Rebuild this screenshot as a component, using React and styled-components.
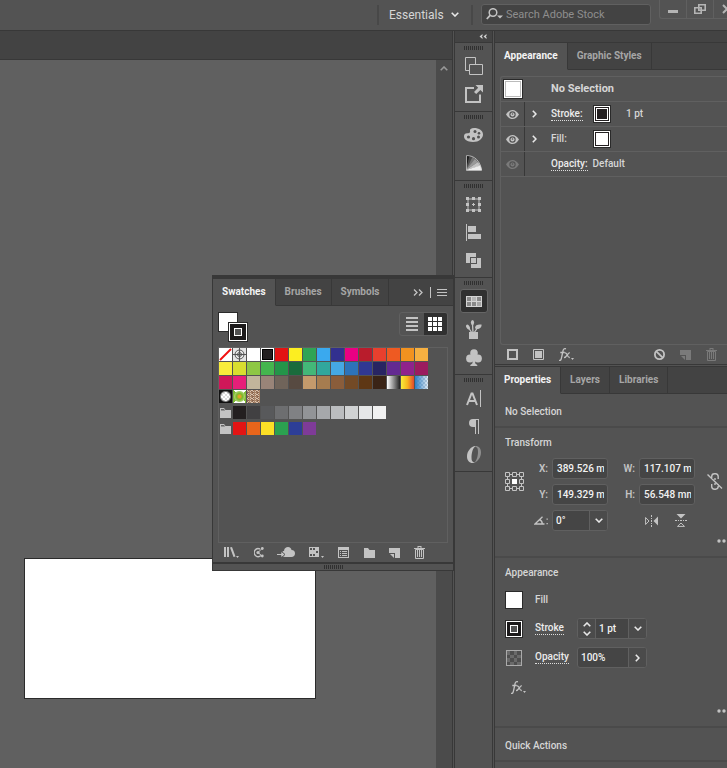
import React from "react";
import styled, { createGlobalStyle, css } from "styled-components";

const C = {
  panel: "#535353",
  strip: "#434343",
  line: "#383838",
  soft: "#606060",
  field: "#454545",
  icon: "#c3c3c3",
  text: "#d6d6d6",
  dim: "#a6a6a6",
};

const Global = createGlobalStyle`
  * { box-sizing: border-box; }
  body {
    margin: 0;
    background: ${C.panel};
    color: ${C.text};
    font: 500 10px/14px Roboto, "Noto Sans", sans-serif;
    overflow: hidden;
  }
  button, input {
    margin: 0;
    padding: 0;
    border: 0;
    border-radius: 0;
    background: none;
    color: inherit;
    font: inherit;
  }
  svg { display: block; flex: none; }
  h2 { margin: 0; font: inherit; }
`;

/* ---------- page frame ---------- */

const Page = styled.div`
  display: flex;
  flex-direction: column;
  min-height: 100vh;
`;

const TopBar = styled.header`
  display: flex;
  justify-content: flex-end;
  height: 31px;
  border-bottom: 1px solid ${C.line};
`;

const Workspace = styled.main`
  display: grid;
  grid-template-columns: minmax(0, 1fr) 43px 232px;
  flex: 1;
`;

const Divider = styled.span`
  width: 2px;
  height: 20px;
  margin-top: 5px;
  background: #484848;
`;

const WorkspaceMenu = styled.button`
  display: flex;
  align-items: center;
  justify-content: space-between;
  width: 92px;
  height: 29px;
  padding: 0 12px 0 10px;
  font-size: 12px;
  font-weight: 400;
`;

const Search = styled.label`
  display: flex;
  align-items: center;
  gap: 2px;
  width: 170px;
  height: 21px;
  margin: 4px 0 0 8px;
  padding-left: 4px;
  border: 1px solid ${C.soft};
  border-radius: 3px;
  background: ${C.strip};
`;

const SearchInput = styled.input`
  flex: 1;
  min-width: 0;
  font-size: 11px;
  font-weight: 400;
  outline: none;
  &::placeholder { color: #8e8e8e; opacity: 1; }
`;

const WindowControls = styled.div`
  display: flex;
  width: 68px;
  height: 19px;
  margin-left: 8px;
  border: 1px solid ${C.soft};
  border-width: 0 0 1px 1px;
  border-radius: 0 0 0 3px;
  overflow: hidden;
`;

const WindowButton = styled.button`
  display: flex;
  align-items: center;
  justify-content: center;
  flex: none;
  width: 27px;
  border-right: 1px solid ${C.soft};
`;

/* ---------- document ---------- */

const Document = styled.section`
  display: flex;
  flex-direction: column;
  position: relative;
`;

const DocumentTabs = styled.div`
  height: 29px;
  background: ${C.strip};
  border-bottom: 1px solid ${C.line};
`;

const DocumentView = styled.div`
  display: flex;
  flex: 1;
`;

const Canvas = styled.div`
  position: relative;
  flex: 1;
  background: ${C.soft};
`;

const Artboard = styled.div`
  position: absolute;
  left: 24px;
  top: 498px;
  width: 292px;
  height: 141px;
  background: #fff;
  border: 1px solid #2b2b2b;
`;

const ScrollTrack = styled.div`
  display: flex;
  justify-content: center;
  width: 16px;
  padding-top: 6px;
  background: #4b4b4b;
`;

/* ---------- tabs ---------- */

const TabRow = styled.div`
  display: flex;
  height: 27px;
  background: ${C.strip};
`;

const Tab = styled.button.attrs({ role: "tab" })`
  padding: 0 9px;
  border-right: 1px solid ${C.line};
  border-bottom: 1px solid ${C.line};
  color: ${C.dim};
  font-weight: 700;
  ${(p) =>
    p.$active &&
    css`
      background: ${C.panel};
      border-bottom-color: ${C.panel};
      color: #f4f4f4;
    `}
`;

const TabFill = styled.div`
  display: flex;
  align-items: center;
  justify-content: flex-end;
  gap: 7px;
  flex: 1;
  padding-right: 6px;
  border-bottom: 1px solid ${C.line};
`;

/* ---------- dock ---------- */

const Dock = styled.nav`
  display: flex;
  flex-direction: column;
  border: 3px double ${C.line};
  border-width: 0 3px;
`;

const CollapseBar = styled.div`
  display: flex;
  align-items: center;
  justify-content: flex-end;
  height: 12px;
  padding-right: 5px;
  background: ${C.strip};
  border-bottom: 1px solid ${C.line};
`;

const DockGroup = styled.div`
  display: flex;
  flex-direction: column;
  align-items: center;
  padding: 3px 0;
  border-bottom: 1px solid ${C.line};
`;

const Grip = styled.span`
  width: 19px;
  height: 4px;
  background: repeating-linear-gradient(90deg, #303030 0 1px, transparent 1px 2px);
`;

const DockList = styled.div`
  display: flex;
  flex-direction: column;
  padding-top: 2px;
`;

const DockButton = styled.button`
  display: flex;
  align-items: center;
  justify-content: center;
  width: 28px;
  height: 24px;
  margin: 2px 0;
  border-radius: 3px;
  ${(p) =>
    p.$active &&
    css`
      background: #303030;
      border: 1px solid #666;
    `}
`;

/* ---------- floating swatches panel ---------- */

const FloatingPanel = styled.section`
  position: absolute;
  z-index: 1;
  left: 212px;
  top: 244px;
  width: 242px;
  background: ${C.panel};
  border: 1px solid ${C.line};
  border-top-width: 4px;
`;

const SwatchHeader = styled.div`
  display: flex;
  justify-content: space-between;
  padding: 6px 5px 5px 5px;
`;

const FillStroke = styled.div`
  position: relative;
  width: 30px;
  height: 30px;
`;

const StrokeFront = styled.span`
  position: absolute;
  left: 10px;
  top: 10px;
`;

const ViewToggle = styled.div`
  display: flex;
  width: 49px;
  height: 24px;
  border: 1px solid ${C.soft};
  border-radius: 3px;
  overflow: hidden;
`;

const ViewButton = styled.button`
  display: flex;
  align-items: center;
  justify-content: center;
  flex: 1;
  background: ${(p) => (p.$active ? "#303030" : "transparent")};
`;

const SwatchList = styled.div`
  display: flex;
  flex-direction: column;
  gap: 1px;
  height: 196px;
  margin: 0 5px;
  border: 1px solid ${C.soft};
`;

const SwatchRow = styled.div`
  display: flex;
  align-items: center;
  gap: 1px;
  margin-top: ${(p) => (p.$group ? "2px" : "0")};
`;

const Swatch = styled.button`
  width: 13px;
  height: 13px;
  background: ${(p) => p.$fill};
  ${(p) =>
    p.$selected &&
    css`
      border: 1px solid #fff;
      box-shadow: inset 0 0 0 1px #000;
    `}
`;

const PanelFooter = styled.div`
  display: flex;
  align-items: center;
  justify-content: space-between;
  height: 19px;
  padding: 0 28px 0 11px;
`;

const ResizeBar = styled.div`
  display: flex;
  align-items: center;
  justify-content: center;
  height: 8px;
  border-top: 2px solid ${C.line};
`;

const IconButton = styled.button`
  display: flex;
  opacity: ${(p) => (p.$faded ? 0.35 : 1)};
`;

/* ---------- right column ---------- */

const Side = styled.aside`
  min-width: 0;
`;

const AppearanceList = styled.div`
  height: 269px;
  margin: 6px 0 0 5px;
  border: 1px solid ${C.soft};
  border-right: 0;
  border-radius: 3px 0 0 3px;
`;

const AppearanceRow = styled.div`
  display: flex;
  align-items: stretch;
  height: 25px;
  border-bottom: 1px solid ${C.soft};
`;

const EyeCell = styled.button`
  display: flex;
  align-items: center;
  justify-content: center;
  width: 24px;
  border-right: 1px solid ${(p) => (p.$plain ? "transparent" : C.line)};
`;

const RowBody = styled.div`
  display: flex;
  align-items: center;
  flex: 1;
`;

const Expander = styled.button`
  width: 26px;
  padding-left: 7px;
`;

const RowLabel = styled.span`
  width: ${(p) => (p.$auto ? "auto" : "42px")};
  margin-right: ${(p) => (p.$auto ? "5px" : "0")};
  font-weight: ${(p) => (p.$bold ? 700 : 500)};
  font-size: ${(p) => (p.$bold ? "11px" : "10px")};
`;

const Dotted = styled.button`
  height: 13px;
  border-bottom: 1px dotted #ddd;
  color: #ececec;
  line-height: 12px;
  font-weight: 500;
`;

const RowValue = styled.span`
  margin-left: 15px;
`;

const AppearanceFooter = styled.div`
  display: flex;
  align-items: center;
  gap: 15px;
  height: 19px;
  padding: 0 10px 0 12px;
`;

const Spring = styled.span`
  flex: 1;
`;

const Seam = styled.div`
  height: 3px;
  border-top: 1px solid ${C.line};
  border-bottom: 1px solid ${C.line};
`;

const Section = styled.section`
  padding: ${(p) => (p.$short ? "11px 0 7px 10px" : "8px 0 11px 10px")};
  border-bottom: 2px solid #4a4a4a;
`;

const TransformGrid = styled.div`
  display: grid;
  grid-template-columns: 20px 27px 56px 31px 56px 1fr;
  grid-auto-rows: 21px;
  row-gap: 5px;
  align-items: center;
  margin: 8px 0;
`;

const Spanning = styled.button`
  grid-row: 1 / 3;
  padding-left: ${(p) => (p.$right ? "12px" : "0")};
  grid-column: ${(p) => (p.$right ? 6 : 1)};
`;

const FieldLabel = styled.label`
  display: flex;
  justify-content: flex-end;
  padding-right: 4px;
  color: #c4c4c4;
  font-weight: 600;
  grid-column: ${(p) => p.$col};
`;

const Box = styled.div`
  display: flex;
  height: 21px;
  width: ${(p) => (p.$wide ? "70px" : "auto")};
  border: 1px solid ${C.soft};
  border-radius: 3px;
  background: ${C.field};
  overflow: hidden;
`;

const Value = styled.input`
  flex: 1;
  width: 0;
  min-width: 0;
  margin: 0 ${(p) => (p.$clip ? "3px" : "0")} 0 ${(p) => (p.$clip ? "4px" : "3px")};
  color: #f2f2f2;
  outline: none;
`;

const BoxButton = styled.button`
  display: flex;
  flex-direction: column;
  align-items: center;
  justify-content: center;
  gap: 4px;
  width: 18px;
  background: #4b4b4b;
  border: 0 solid ${C.soft};
  border-width: ${(p) => (p.$lead ? "0 1px 0 0" : "0 0 0 1px")};
`;

const FlipPair = styled.div`
  display: flex;
  align-items: center;
  gap: 17px;
  grid-column: 5 / 7;
  padding-left: 6px;
`;

const MoreRow = styled.div`
  display: flex;
  justify-content: flex-end;
  height: 6px;
`;

const PropRow = styled.div`
  display: grid;
  grid-template-columns: 30px 42px 1fr;
  align-items: center;
  height: 29px;
`;

const PropList = styled.div`
  padding: 5px 0 15px;
`;

const Start = styled.span`
  display: flex;
`;

const FxSlot = styled.div`
  padding: 9px 0 0 6px;
`;

/* ---------- icons ---------- */

const Svg = ({ w, h, children, color = C.icon }) => (
  <svg width={w} height={h} viewBox={`0 0 ${w} ${h}`} fill={color} aria-hidden="true">
    {children}
  </svg>
);

const Chevron = ({ dir = "down", color = "#e8e8e8", w = 8, h = 5 }) => {
  const d = {
    down: "M.7.8 4 4 7.3.8",
    up: "M.7 4.2 4 1 7.3 4.2",
    right: "M.8.7 4 4 .8 7.3",
  }[dir];
  const side = dir === "right";
  return (
    <svg width={side ? h : w} height={side ? w : h} viewBox={side ? "0 0 5 8" : "0 0 8 5"} aria-hidden="true">
      <path d={d} fill="none" stroke={color} strokeWidth="1.6" />
    </svg>
  );
};

const SearchIcon = () => (
  <Svg w={18} h={13}>
    <circle cx="7" cy="4.5" r="3.8" fill="none" stroke={C.icon} strokeWidth="1.5" />
    <path d="M4.3 7.2 0.8 11" stroke={C.icon} strokeWidth="1.8" />
    <path d="M11 7.5h6l-3 3z" />
  </Svg>
);

const Minimize = () => (
  <Svg w={10} h={12}><rect y="7" width="10" height="3" fill="#b4b4b4" /></Svg>
);
const Restore = () => (
  <Svg w={12} h={10}>
    <path d="M4.8.8h6.4v5.4H4.8z M.8 3.8h6.4v5.4H.8z" fill={C.panel} stroke="#b4b4b4" strokeWidth="1.6" />
  </Svg>
);
const CloseIcon = () => (
  <Svg w={10} h={10}><path d="M1 1l8 8M9 1 1 9" stroke="#b4b4b4" strokeWidth="2" /></Svg>
);

const DoubleLeft = () => (
  <Svg w={8} h={5} color="#d0d0d0"><path d="M3.5 0 .5 2.5l3 2.5V3.2L2.7 2.5l.8-.7zM7.5 0l-3 2.5 3 2.5V3.2l-.8-.7.8-.7z" /></Svg>
);

const ArtboardsIcon = () => (
  <Svg w={18} h={18}>
    <path d="M.5.5h10v13H.5z" fill="none" stroke={C.icon} />
    <path d="M4.5 7.5h13v10h-13z" fill={C.panel} stroke={C.icon} />
  </Svg>
);
const ExportIcon = () => (
  <Svg w={18} h={18}>
    <path d="M9 3H1v14h14V9.500" fill="none" stroke={C.icon} strokeWidth="2" />
    <path d="M10.500 0H18v7.500l-2.600-2.600-4.200 4.200-2.200-2.200 4.200-4.200z" />
  </Svg>
);
const PaletteIcon = () => (
  <Svg w={19} h={14}>
    <path d="M10 0c5 0 9 2.600 9 6.500S15 14 9 14 0 11.500 0 8.300C0 6 1.500 5 3.500 5.200 5.500 5.400 6.500 4.500 6 3 5.600 1.400 7 0 10 0z" />
    <g fill={C.panel}>
      <circle cx="11" cy="3.500" r="1.500" /><circle cx="15" cy="5.300" r="1.300" />
      <circle cx="4.500" cy="9" r="1.600" /><circle cx="9.500" cy="10.700" r="1.600" /><circle cx="14.500" cy="9" r="1.500" />
    </g>
  </Svg>
);
const GradientIcon = () => (
  <Svg w={16} h={16}>
    <path d="M0 15V0l4 .8z" fill="#1e1e1e" /><path d="M0 15 3.500.6 7 2.300z" fill="#4b4b4b" />
    <path d="M0 15 6.500 2l3 2.400z" fill="#747474" /><path d="M0 15 9 4l3 3z" fill="#999" />
    <path d="M0 15 12 7l2.500 4z" fill="#c2c2c2" /><path d="M0 15l14.500-4.500L16 15z" fill="#eee" />
    <path d="M.5 15.500V.5c8 0 14 5.500 15 15z" fill="none" stroke="#ccc" strokeWidth=".8" />
  </Svg>
);
const TransformIcon = () => (
  <Svg w={15} h={15}>
    <path d="M2 2h11v11H2z" fill="none" stroke={C.icon} />
    <path d="M0 0h3v3H0zM6 0h3v3H6zM12 0h3v3h-3zM0 6h3v3H0zM12 6h3v3h-3zM0 12h3v3H0zM6 12h3v3H6zM12 12h3v3h-3zM7 6h1v3H7zM6 7h3v1H6z" />
  </Svg>
);
const AlignIcon = () => (
  <Svg w={15} h={17}><path d="M0 0h1v17H0zM2 2h8v6H2zM2 10h13v5H2z" /></Svg>
);
const PathfinderIcon = () => (
  <Svg w={15} h={15}>
    <path d="M0 0h10v4H4v6H0zM11 5h4v10H5v-4h6z" /><path d="M5 5h5v5H5z" />
  </Svg>
);
const SwatchesIcon = () => (
  <Svg w={16} h={11}>
    <path d="M0 0h16v11H0z" fill="#d4d4d4" />
    <path d="M1 1h4v4H1zM11 1h4v4h-4zM1 6h4v4H1zM6 6h4v4H6z" fill="#888" />
    <path d="M6 1h4v4H6z" fill="#b5b5b5" /><path d="M11 6h4v4h-4z" fill="#a4a4a4" />
  </Svg>
);
const BrushesIcon = () => (
  <Svg w={16} h={19}>
    <path d="M3 12h9v7H3z" />
    <path d="M2 7l4 6M6.500 4l.5 9M12 7l-4 6" stroke={C.icon} strokeWidth="1.300" />
    <ellipse cx="6.500" cy="2.500" rx="1.600" ry="2.500" /><ellipse cx="2" cy="7" rx="1.600" ry="2.600" transform="rotate(-30 2 7)" />
    <path d="M9 8c0-3 3-4 6.500-3.500C16 7 13.500 9.500 10 9z" />
  </Svg>
);
const ClubIcon = () => (
  <Svg w={16} h={17}>
    <circle cx="8" cy="4" r="3.800" /><circle cx="4" cy="9.500" r="3.900" /><circle cx="12" cy="9.500" r="3.900" />
    <path d="M7 7h2l1 4-1 0 .3 3.500 2 1.500v1h-7v-1l2-1.500L7 11z" />
  </Svg>
);
const CharacterIcon = () => (
  <Svg w={15} h={17}>
    <path d="M1 15 5.500 3.500h1L11 15M3 11h6" fill="none" stroke={C.icon} strokeWidth="2" /><path d="M14 0h1v17h-1z" />
  </Svg>
);
const ParagraphIcon = () => (
  <Svg w={12} h={15}><path d="M5 0h6v15h-1V1H8v14H7V8H5a4 4 0 0 1 0-8z" /></Svg>
);
const OpenTypeIcon = () => (
  <Svg w={14} h={17}>
    <path fillRule="evenodd" d="M8.500 0C4 .5 0 5 0 10.500 0 14.500 2.500 17 5.500 17c1 0 2-.3 3-.9-2.500.4-4-.6-4-4.100C4.500 7 6 1 8.500.8z" />
    <path fill="#8f8f8f" d="M8.500 0C12 0 14 2.500 14 6.500 14 11 11 15.500 7.500 16.600 9.500 15 11 10 11 6c0-3-.5-4.600-2.500-5.200z" />
  </Svg>
);

const EyeIcon = () => (
  <Svg w={13} h={9}>
    <path fillRule="evenodd" d="M0 4.500C2 1.500 4 0 6.500 0S11 1.500 13 4.500C11 7.500 9 9 6.500 9S2 7.500 0 4.500zM6.500 1.300a3.200 3.200 0 1 0 0 6.400 3.200 3.200 0 0 0 0-6.400z" />
    <circle cx="6.500" cy="4.500" r="2" /><circle cx="6.500" cy="4" r=".8" fill={C.panel} />
  </Svg>
);

const SolidSwatch = ({ fill = "#fff", size = 18, ring = "#231f20" }) => (
  <Svg w={size} h={size}>
    <rect width={size} height={size} fill="#2a2a2a" />
    <rect x="1" y="1" width={size - 2} height={size - 2} fill="#fff" />
    {ring && <rect x="2.500" y="2.500" width={size - 5} height={size - 5} fill="#fff" stroke={ring} />}
    {ring && <rect x="4" y="4" width={size - 8} height={size - 8} fill={fill} />}
  </Svg>
);
const StrokeSwatch = ({ size = 18 }) => {
  const m = size / 2;
  return (
    <Svg w={size} h={size}>
      <rect width={size} height={size} fill="#2a2a2a" />
      <rect x="1.500" y="1.500" width={size - 3} height={size - 3} fill="#1c1a1b" stroke="#fff" />
      <rect x={m - 3.5} y={m - 3.5} width="7" height="7" fill="#535353" stroke="#fff" />
    </Svg>
  );
};
const Checker = () => (
  <Svg w={18} h={18}>
    <rect x="1.500" y="1.500" width="15" height="15" fill="#6a6a6a" stroke="#aaa" />
    <path fill="#4e4e4e" d="M5 2h4v4H5zM12 2h4v4h-4zM2 6h3v3H2zM9 6h3v3H9zM5 9h4v4H5zM12 9h4v4h-4zM2 13h3v3H2zM9 13h3v3H9z" />
  </Svg>
);

const AddStrokeIcon = () => <Svg w={11} h={11}><path fillRule="evenodd" d="M0 0h11v11H0zM2 2v7h7V2z" /></Svg>;
const AddFillIcon = () => (
  <Svg w={11} h={11}><path d="M.5.5h10v10H.5z" fill="none" stroke={C.icon} /><path d="M2 2h7v7H2z" /></Svg>
);
const Fx = () => (
  <Svg w={15} h={13}>
    <g fill="none" stroke={C.icon} strokeWidth="1.300">
      <path d="M0 12.400C2 12.800 2.300 11 2.800 8.500L4 3C4.300 1 5.200.3 7 .8M1.300 4.500h4.500" />
      <path d="M5.800 5c3-1 2 5 5 4.500M10.800 4.600C8.500 4.600 8 9.600 5 9.600" />
    </g>
    <path d="M12 10h3l-1.500 2z" />
  </Svg>
);
const ClearIcon = () => (
  <Svg w={11} h={11}><circle cx="5.500" cy="5.500" r="4.600" fill="none" stroke={C.icon} strokeWidth="1.800" /><path d="M2.300 2.300l6.400 6.400" stroke={C.icon} strokeWidth="1.800" /></Svg>
);
const NewIcon = () => <Svg w={11} h={10}><path d="M0 0h11v10H6V5H0z" /><path d="M1 6h4v4z" /></Svg>;
const TrashIcon = () => (
  <Svg w={11} h={13}>
    <path d="M0 2h11v1H0zM3.500 0h4v2h-1V1h-2v1h-1z" />
    <path d="M1.500 3.500h8v9h-8z" fill="none" stroke={C.icon} /><path d="M3 4h1v7H3zM5 4h1v7H5zM7 4h1v7H7z" />
  </Svg>
);
const LibraryIcon = () => (
  <Svg w={16} h={11}>
    <path d="M0 0h2v10H0zM3 0h2v10H3zM6 .5l2-.5 3.500 9.500-2 .5zM12 9h3l-1.500 2z" />
  </Svg>
);
const ThemeIcon = () => (
  <Svg w={10} h={11}>
    <path d="M6 2a4 4 0 1 0 1 6.500" fill="none" stroke={C.icon} strokeWidth="1.400" />
    <circle cx="4" cy="5.500" r="1.600" /><circle cx="8.300" cy="1.500" r="1.400" /><circle cx="8.300" cy="9" r="1.400" />
    <path d="M4 5.500l4-4M4 5.500l4 3.500" stroke={C.icon} />
  </Svg>
);
const CloudIcon = () => (
  <Svg w={18} h={11}>
    <path d="M8 10c-2.500 0-3-2-3-3.500C5 4.500 6 4 7 4c.3-3 2-4 4-4s3.500 1.500 3.500 3C17 3 18 4.500 18 6.500S16.500 10 14.500 10z" />
    <path d="M0 6.500h4V4l4 3.500L4 11V8.500H0z" stroke={C.panel} strokeWidth="1" />
    <path d="M0 7h4.500v1H0z" />
  </Svg>
);
const KindsIcon = () => (
  <Svg w={15} h={11}>
    <path fillRule="evenodd" d="M0 0h10v10H0zM1 1v2h2V1zM7 4v2h2V4zM4 7v2h2V7zM4 1v2h2V1zM1 7v2h2V7z" />
    <path d="M12 9h3l-1.500 2z" />
  </Svg>
);
const OptionsIcon = () => (
  <Svg w={11} h={11}>
    <path fillRule="evenodd" d="M0 0h11v11H0zM1 3v7h9V3z" /><path d="M2 4h1v1H2zM4 4h5v1H4zM2 6h1v1H2zM4 6h5v1H4zM2 8h1v1H2zM4 8h5v1H4z" />
  </Svg>
);
const FolderIcon = ({ open }) => (
  <Svg w={13} h={10}>
    <path d="M1 0h4l1.500 2H12v8H1z" />{open && <path d="M2 1h3l1 1.500H2z" fill="#666" />}
  </Svg>
);

const ListIcon = () => <Svg w={12} h={14}><path d="M0 0h12v2H0zM0 4h12v2H0zM0 8h12v2H0zM0 12h12v2H0z" /></Svg>;
const GridIcon = () => (
  <Svg w={14} h={14} color="#fff"><path d="M0 0h4v4H0zM5 0h4v4H5zM10 0h4v4h-4zM0 5h4v4H0zM5 5h4v4H5zM10 5h4v4h-4zM0 10h4v4H0zM5 10h4v4H5zM10 10h4v4h-4z" /></Svg>
);
const MoreTabs = () => <Svg w={10} h={7}><path d="M1 .5l3 3-3 3M6 .5l3 3-3 3" fill="none" stroke={C.icon} strokeWidth="1.300" /></Svg>;
const MenuIcon = () => <Svg w={17} h={11}><path d="M0 0h1v11H0zM7 2h10v1H7zM7 5h10v1H7zM7 8h10v1H7z" /></Svg>;

const RefPointIcon = () => (
  <Svg w={19} h={19}>
    <path d="M2.500 2.500h14v14h-14z" fill="none" stroke={C.icon} />
    <g fill={C.panel} stroke={C.icon}>
      <path d="M.5.5h4v4h-4zM7.500.5h4v4h-4zM14.500.5h4v4h-4zM.5 7.500h4v4h-4zM14.500 7.500h4v4h-4zM.5 14.500h4v4h-4zM7.500 14.500h4v4h-4zM14.500 14.500h4v4h-4z" />
    </g>
    <path d="M7 7h5v5H7z" fill="#fff" />
  </Svg>
);
const UnlinkIcon = () => (
  <Svg w={16} h={17}>
    <g fill="none" stroke={C.icon} strokeWidth="1.400">
      <path d="M4.700 6V3.500A2.800 2.800 0 0 1 7.500.8h1a2.800 2.800 0 0 1 2.700 2.700V6M4.700 11v2.500a2.800 2.800 0 0 0 2.800 2.700h1a2.800 2.800 0 0 0 2.700-2.700V11M8 5v2M8 10v2M.5 1.500l14.500 14" />
    </g>
  </Svg>
);
const AngleIcon = () => (
  <Svg w={14} h={9}>
    <path d="M8.500.7 1 8h9.500M5.500 3.700C7.500 4.500 8.300 6 8.300 8" fill="none" stroke={C.icon} strokeWidth="1.300" />
    <path d="M12.500 2.500h1.300v1.300h-1.300zM12.500 7h1.300v1.300h-1.300z" />
  </Svg>
);
const FlipH = () => (
  <Svg w={13} h={12}>
    <path d="M.6 2.500 4 6 .6 9.500z" fill="none" stroke={C.icon} /><path d="M13 1.500v9L8.500 6z" />
    <path d="M6 0h1v2H6zM6 3h1v1H6zM6 5h1v2H6zM6 8h1v1H6zM6 10h1v2H6z" />
  </Svg>
);
const FlipV = () => (
  <Svg w={12} h={13}>
    <path d="M1.500 0h9L6 4.500z" /><path d="M2.500 12.400 6 9l3.500 3.400z" fill="none" stroke={C.icon} />
    <path d="M0 6h2v1H0zM3 6h1v1H3zM5 6h2v1H5zM8 6h1v1H8zM10 6h2v1h-2z" />
  </Svg>
);
const Dots = () => (
  <Svg w={10} h={4}><circle cx="2" cy="2" r="1.700" /><circle cx="7" cy="2" r="1.700" /></Svg>
);

const NoneSwatch = () => (
  <Svg w={13} h={13}><path d="M0 0h13v13H0z" fill="#fff" /><path d="M1 12 12 1" stroke="#f01010" strokeWidth="2" /></Svg>
);
const RegistrationSwatch = () => (
  <Svg w={13} h={13}>
    <path d="M0 0h13v13H0z" fill="#e4e4e4" />
    <g fill="none" stroke="#555"><circle cx="6.500" cy="6.500" r="4.500" /><circle cx="6.500" cy="6.500" r="2" /><path d="M6.500 0v13M0 6.500h13" /></g>
  </Svg>
);

/* ---------- data ---------- */

const transparentBlue =
  "linear-gradient(90deg, #2d7fc4, transparent), repeating-conic-gradient(#b9cbdc 0 25%, #e6eef5 0 50%) 0 0 / 4px 4px";

const swatchRows = [
  ["none", "registration", "#fff", "#231f20", "#e31313", "#fcee21", "#2fa455", "#3aa9ee", "#32308f", "#ea0083", "#b91c2c", "#e8402e", "#ee5a22", "#f2921f", "#f6b041"],
  ["#f8ec3b", "#d8de2f", "#8ec744", "#44b54e", "#249549", "#1a6b3c", "#43b778", "#31a79d", "#45a8e4", "#2d73b9", "#303892", "#282562", "#632a91", "#8f238c", "#9b1c5f"],
  ["#cf1759", "#e61f79", "#c2b59b", "#998478", "#70645a", "#574a41", "#c49a6c", "#a67c4f", "#8a5d3b", "#734a26", "#5e3714", "#3a2416",
    "linear-gradient(90deg, #fff, #222)", "linear-gradient(90deg, #f8ed3a, #f8b51e 50%, #e04a2c)", transparentBlue],
  [
    "radial-gradient(circle, transparent 4px, #111 6px), repeating-conic-gradient(#ddd 0 25%, #fff 0 50%) 0 0 / 4px 4px",
    "radial-gradient(circle, #e8a02a 1px, #7cb928 3px, #a5cf6a 5px, transparent 6px), repeating-conic-gradient(from 45deg at 50% 50%, #7fbb35 0 25%, #fff 0 50%)",
    "repeating-conic-gradient(from 20deg, #a98468 0 9%, #d8c3b0 0 14%, #8a6650 0 22%) 0 0 / 5px 4px",
  ],
];

const swatchGroups = [
  ["#231f20", "#414042", "#58595b", "#6d6e70", "#808184", "#929497", "#a6a8ab", "#bbbdbf", "#d0d2d3", "#e6e7e8", "#f1f1f1"],
  ["#e31414", "#e8651b", "#fcdf26", "#2ba150", "#2d3e97", "#7f3b98"],
];

const drawnSwatches = { none: NoneSwatch, registration: RegistrationSwatch };

const dockGroups = [
  [["Artboards", ArtboardsIcon], ["Asset Export", ExportIcon]],
  [["Color", PaletteIcon], ["Gradient", GradientIcon]],
  [["Transform", TransformIcon], ["Align", AlignIcon], ["Pathfinder", PathfinderIcon]],
  [["Swatches", SwatchesIcon], ["Brushes", BrushesIcon], ["Symbols", ClubIcon]],
  [["Character", CharacterIcon], ["Paragraph", ParagraphIcon], ["OpenType", OpenTypeIcon]],
];

const swatchTools = [
  ["Swatch libraries", LibraryIcon], ["Color themes", ThemeIcon], ["Add to library", CloudIcon], ["Show kinds", KindsIcon],
  ["Swatch options", OptionsIcon], ["New group", FolderIcon], ["New swatch", NewIcon], ["Delete swatch", TrashIcon],
];

/* ---------- parts ---------- */

const Tabs = ({ names, children }) => (
  <TabRow role="tablist">
    {names.map((n, i) => (
      <Tab key={n} $active={i === 0} aria-selected={i === 0}>{n}</Tab>
    ))}
    <TabFill>{children}</TabFill>
  </TabRow>
);

const SwatchCell = ({ fill, label }) => {
  const Drawing = drawnSwatches[fill];
  return (
    <Swatch $fill={Drawing ? "none" : fill} aria-label={label}>
      {Drawing && <Drawing />}
    </Swatch>
  );
};

const SwatchesPanel = () => (
  <FloatingPanel>
    <Tabs names={["Swatches", "Brushes", "Symbols"]}>
      <IconButton aria-label="More tabs"><MoreTabs /></IconButton>
      <IconButton aria-label="Panel menu"><MenuIcon /></IconButton>
    </Tabs>
    <SwatchHeader>
      <FillStroke>
        <SolidSwatch size={20} ring={null} />
        <StrokeFront><StrokeSwatch size={20} /></StrokeFront>
      </FillStroke>
      <ViewToggle>
        <ViewButton aria-label="List view"><ListIcon /></ViewButton>
        <ViewButton $active aria-label="Thumbnail view"><GridIcon /></ViewButton>
      </ViewToggle>
    </SwatchHeader>
    <SwatchList>
      {swatchRows.map((row, r) => (
        <SwatchRow key={r}>
          {row.map((fill, i) =>
            fill === "#231f20" ? (
              <Swatch key={i} $fill={fill} $selected aria-label="Black, selected" />
            ) : (
              <SwatchCell key={i} fill={fill} label={`Swatch ${r * 15 + i + 1}`} />
            )
          )}
        </SwatchRow>
      ))}
      {swatchGroups.map((row, r) => (
        <SwatchRow key={r} $group>
          <FolderIcon open />
          {row.map((fill) => <SwatchCell key={fill} fill={fill} label={fill} />)}
        </SwatchRow>
      ))}
    </SwatchList>
    <PanelFooter>
      {swatchTools.map(([name, Icon]) => (
        <IconButton key={name} aria-label={name}><Icon /></IconButton>
      ))}
    </PanelFooter>
    <ResizeBar><Grip /></ResizeBar>
  </FloatingPanel>
);

const NumberField = ({ id, label, value, col }) => (
  <>
    <FieldLabel htmlFor={id} $col={col}>{label}</FieldLabel>
    <Box><Value id={id} $clip defaultValue={value} /></Box>
  </>
);

const AppearancePanel = () => (
  <>
    <Tabs names={["Appearance", "Graphic Styles"]} />
    <AppearanceList>
      <AppearanceRow>
        <EyeCell as="span" $plain><SolidSwatch size={20} ring="#bbb" /></EyeCell>
        <RowBody><Expander as="span" /><RowLabel $bold $auto>No Selection</RowLabel></RowBody>
      </AppearanceRow>
      <AppearanceRow>
        <EyeCell aria-label="Toggle stroke"><EyeIcon /></EyeCell>
        <RowBody>
          <Expander aria-label="Expand stroke"><Chevron dir="right" /></Expander>
          <RowLabel><Dotted>Stroke:</Dotted></RowLabel>
          <SolidSwatch fill="#231f20" />
          <RowValue>1 pt</RowValue>
        </RowBody>
      </AppearanceRow>
      <AppearanceRow>
        <EyeCell aria-label="Toggle fill"><EyeIcon /></EyeCell>
        <RowBody>
          <Expander aria-label="Expand fill"><Chevron dir="right" /></Expander>
          <RowLabel>Fill:</RowLabel>
          <SolidSwatch />
        </RowBody>
      </AppearanceRow>
      <AppearanceRow>
        <EyeCell aria-label="Toggle opacity"><IconButton as="span" $faded><EyeIcon /></IconButton></EyeCell>
        <RowBody>
          <Expander as="span" />
          <RowLabel $auto><Dotted>Opacity:</Dotted></RowLabel>
          <span>Default</span>
        </RowBody>
      </AppearanceRow>
    </AppearanceList>
    <AppearanceFooter>
      <IconButton aria-label="Add stroke"><AddStrokeIcon /></IconButton>
      <IconButton aria-label="Add fill"><AddFillIcon /></IconButton>
      <IconButton aria-label="Add effect"><Fx /></IconButton>
      <Spring />
      <IconButton aria-label="Clear appearance"><ClearIcon /></IconButton>
      <IconButton $faded aria-label="Duplicate item"><NewIcon /></IconButton>
      <IconButton $faded aria-label="Delete item"><TrashIcon /></IconButton>
    </AppearanceFooter>
  </>
);

const PropertiesPanel = () => (
  <>
    <Tabs names={["Properties", "Layers", "Libraries"]} />
    <Section $short><h2>No Selection</h2></Section>
    <Section>
      <h2>Transform</h2>
      <TransformGrid>
        <Spanning aria-label="Reference point"><RefPointIcon /></Spanning>
        <NumberField id="x" label="X:" value="389.526 mm" col={2} />
        <NumberField id="w" label="W:" value="117.107 mm" col={4} />
        <Spanning $right aria-label="Constrain proportions"><UnlinkIcon /></Spanning>
        <NumberField id="y" label="Y:" value="149.329 mm" col={2} />
        <NumberField id="h" label="H:" value="56.548 mm" col={4} />
        <FieldLabel htmlFor="angle" $col={2} aria-label="Rotate"><AngleIcon /></FieldLabel>
        <Box>
          <Value id="angle" defaultValue="0°" />
          <BoxButton aria-label="Rotate presets"><Chevron /></BoxButton>
        </Box>
        <FlipPair>
          <IconButton aria-label="Flip horizontally"><FlipH /></IconButton>
          <IconButton aria-label="Flip vertically"><FlipV /></IconButton>
        </FlipPair>
      </TransformGrid>
      <MoreRow><IconButton aria-label="More transform options"><Dots /></IconButton></MoreRow>
    </Section>
    <Section>
      <h2>Appearance</h2>
      <PropList>
        <PropRow>
          <Start><SolidSwatch ring={null} /></Start>
          <span>Fill</span>
        </PropRow>
        <PropRow>
          <Start><StrokeSwatch /></Start>
          <Start><Dotted>Stroke</Dotted></Start>
          <Box $wide>
            <BoxButton $lead aria-label="Step stroke weight"><Chevron dir="up" /><Chevron /></BoxButton>
            <Value defaultValue="1 pt" aria-label="Stroke weight" />
            <BoxButton aria-label="Stroke presets"><Chevron /></BoxButton>
          </Box>
        </PropRow>
        <PropRow>
          <Start><Checker /></Start>
          <Start><Dotted>Opacity</Dotted></Start>
          <Box $wide>
            <Value defaultValue="100%" aria-label="Opacity" />
            <BoxButton aria-label="Opacity slider"><Chevron dir="right" /></BoxButton>
          </Box>
        </PropRow>
        <FxSlot><IconButton aria-label="Choose an effect"><Fx /></IconButton></FxSlot>
      </PropList>
      <MoreRow><IconButton aria-label="More appearance options"><Dots /></IconButton></MoreRow>
    </Section>
    <Section $short><h2>Quick Actions</h2></Section>
  </>
);

export default function App() {
  return (
    <Page>
      <Global />
      <TopBar>
        <Divider />
        <WorkspaceMenu>Essentials <Chevron /></WorkspaceMenu>
        <Divider />
        <Search>
          <SearchIcon />
          <SearchInput placeholder="Search Adobe Stock" aria-label="Search Adobe Stock" />
        </Search>
        <WindowControls>
          <WindowButton aria-label="Minimize"><Minimize /></WindowButton>
          <WindowButton aria-label="Restore"><Restore /></WindowButton>
          <WindowButton aria-label="Close"><CloseIcon /></WindowButton>
        </WindowControls>
      </TopBar>
      <Workspace>
        <Document>
          <DocumentTabs />
          <DocumentView>
            <Canvas><Artboard /></Canvas>
            <ScrollTrack><Chevron dir="up" color="#999" /></ScrollTrack>
          </DocumentView>
          <SwatchesPanel />
        </Document>
        <Dock>
          <CollapseBar><DoubleLeft /></CollapseBar>
          {dockGroups.map((group, g) => (
            <DockGroup key={g}>
              <Grip />
              <DockList>
                {group.map(([name, Icon]) => (
                  <DockButton key={name} $active={name === "Swatches"} aria-label={name}><Icon /></DockButton>
                ))}
              </DockList>
            </DockGroup>
          ))}
        </Dock>
        <Side>
          <CollapseBar />
          <AppearancePanel />
          <Seam />
          <PropertiesPanel />
        </Side>
      </Workspace>
    </Page>
  );
}
